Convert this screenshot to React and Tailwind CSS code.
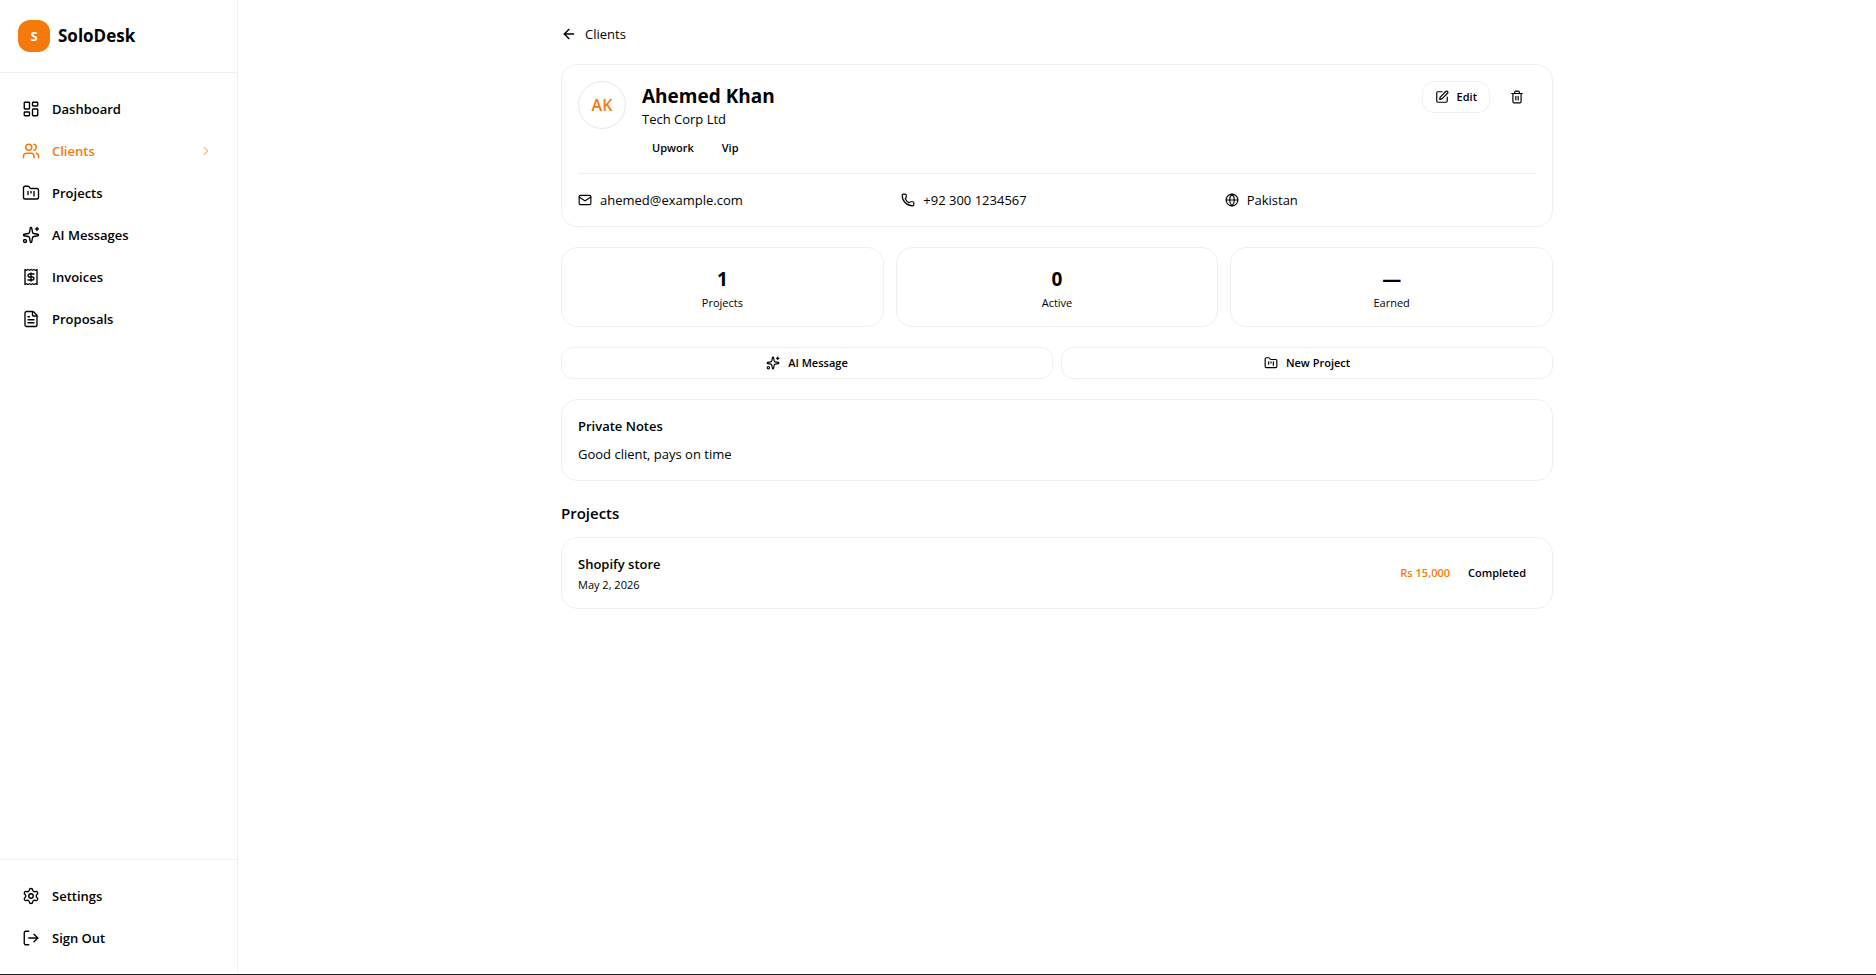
import React from "react";
import {
  ArrowLeft,
  ChevronRight,
  FileText,
  FolderKanban,
  Globe,
  LayoutDashboard,
  LogOut,
  Mail,
  Phone,
  Settings,
  Sparkles,
  SquarePen,
  Trash2,
  Users,
} from "lucide-react";

const ReceiptIcon = ({ size = 18, strokeWidth = 2 }) => (
  <svg
    width={size}
    height={size}
    viewBox="0 0 24 24"
    fill="none"
    stroke="currentColor"
    strokeWidth={strokeWidth}
    strokeLinecap="round"
    strokeLinejoin="round"
    aria-hidden="true"
  >
    <path d="M4 2v20l2-1 2 1 2-1 2 1 2-1 2 1 2-1 2 1V2l-2 1-2-1-2 1-2-1-2 1-2-1-2 1Z" />
    <path d="M16 8h-6a2 2 0 1 0 0 4h4a2 2 0 1 1 0 4H8" />
    <path d="M12 17.5v-11" />
  </svg>
);

const navItems = [
  { label: "Dashboard", icon: LayoutDashboard },
  { label: "Clients", icon: Users, active: true },
  { label: "Projects", icon: FolderKanban },
  { label: "AI Messages", icon: Sparkles },
  { label: "Invoices", icon: ReceiptIcon },
  { label: "Proposals", icon: FileText },
];

const contacts = [
  { value: "ahemed@example.com", icon: Mail },
  { value: "+92 300 1234567", icon: Phone },
  { value: "Pakistan", icon: Globe },
];

const stats = [
  { value: "1", label: "Projects" },
  { value: "0", label: "Active" },
  { value: "—", label: "Earned" },
];

const projects = [
  { id: 1, title: "Shopify store", date: "May 2, 2026", amount: "Rs 15,000", status: "Completed" },
];

const NavLink = ({ label, icon: Icon, active }) => (
  <a
    href="#"
    className={`flex h-10 items-center gap-3 pl-[10px] pr-3 text-[13px] font-semibold leading-5 ${
      active ? "text-[#f67a0b]" : "text-black"
    }`}
  >
    <Icon size={18} strokeWidth={active ? 2 : 1.8} />
    <span className="flex-1">{label}</span>
    {active && <ChevronRight size={14} className="opacity-50" />}
  </a>
);

const Sidebar = () => (
  <aside className="flex w-[238px] shrink-0 flex-col border-r border-[#f0f0f0]">
    <div className="flex items-center gap-2 border-b border-[#f0f0f0] px-[18px] py-5">
      <div className="flex h-8 w-8 items-center justify-center rounded-xl bg-[#f67a0b] text-[13px] font-bold leading-5 text-white">
        S
      </div>
      <span className="text-[17px] font-bold leading-8">SoloDesk</span>
    </div>

    <nav className="flex flex-1 flex-col gap-[2px] px-3 py-4">
      {navItems.map((item) => (
        <NavLink key={item.label} {...item} />
      ))}
    </nav>

    <div className="flex flex-col gap-[2px] border-t border-[#f0f0f0] px-3 py-4">
      <NavLink label="Settings" icon={Settings} />
      <button
        type="button"
        className="flex h-10 items-center gap-3 pl-[10px] pr-3 text-[13px] font-semibold leading-5"
      >
        <LogOut size={18} strokeWidth={1.8} />
        Sign Out
      </button>
    </div>
  </aside>
);

const App = () => {
  return (
    <div className="flex min-h-screen flex-col bg-white font-['Segoe_UI','Open_Sans','Noto_Sans',sans-serif] text-black">
      <div className="flex flex-1">
        <Sidebar />

        <main className="flex-1">
          <div className="mx-auto flex max-w-5xl flex-col gap-5 px-4 py-6">
            <a href="#" className="flex items-center gap-2 self-start text-[13px] leading-5">
              <ArrowLeft size={16} />
              Clients
            </a>

            {/* Client details */}
            <section className="rounded-2xl border border-[#f0f0f0] p-4">
              <div className="flex items-start gap-4">
                <div className="flex h-12 w-12 shrink-0 items-center justify-center rounded-full border border-[#e8e8e8] font-semibold text-[#f67a0b]">
                  AK
                </div>
                <div className="flex-1">
                  <h1 className="text-[19px] font-bold leading-[30px]">Ahemed Khan</h1>
                  <p className="text-[13px] leading-4">Tech Corp Ltd</p>
                  <div className="mt-3 flex gap-2 text-[11px] font-semibold leading-[18px]">
                    <span className="px-[10px]">Upwork</span>
                    <span className="px-[10px]">Vip</span>
                  </div>
                </div>
                <div className="flex gap-2">
                  <button
                    type="button"
                    className="flex h-8 items-center gap-2 rounded-xl border border-[#f0f0f0] px-3 text-[11px] font-semibold leading-[18px]"
                  >
                    <SquarePen size={14} />
                    Edit
                  </button>
                  <button type="button" aria-label="Delete client" className="flex h-8 items-center px-3">
                    <Trash2 size={14} />
                  </button>
                </div>
              </div>

              <div className="mt-4 grid grid-cols-3 gap-3 border-t border-[#f0f0f0] pt-4">
                {contacts.map(({ value, icon: Icon }) => (
                  <div key={value} className="flex items-center gap-2 text-[13px] leading-5">
                    <Icon size={14} />
                    {value}
                  </div>
                ))}
              </div>
            </section>

            {/* Stats */}
            <div className="grid grid-cols-3 gap-3">
              {stats.map((stat) => (
                <div key={stat.label} className="rounded-2xl border border-[#f0f0f0] p-4 text-center">
                  <p className="text-[19px] font-bold leading-[30px]">{stat.value}</p>
                  <p className="mt-[2px] text-[11px] leading-[14px]">{stat.label}</p>
                </div>
              ))}
            </div>

            {/* Quick actions */}
            <div className="grid grid-cols-2 gap-2">
              <button
                type="button"
                className="flex h-8 items-center justify-center gap-2 rounded-xl border border-[#f0f0f0] text-[11px] font-semibold leading-[18px]"
              >
                <Sparkles size={14} />
                AI Message
              </button>
              <button
                type="button"
                className="flex h-8 items-center justify-center gap-2 rounded-xl border border-[#f0f0f0] text-[11px] font-semibold leading-[18px]"
              >
                <FolderKanban size={14} />
                New Project
              </button>
            </div>

            <section className="rounded-2xl border border-[#f0f0f0] p-4 text-[13px] leading-5">
              <h2 className="font-semibold">Private Notes</h2>
              <p className="mt-2">Good client, pays on time</p>
            </section>

            {/* Projects */}
            <section>
              <h2 className="mb-3 text-[15px] font-semibold leading-6">Projects</h2>
              {projects.map((project) => (
                <a
                  key={project.id}
                  href="#"
                  className="flex items-center justify-between rounded-2xl border border-[#f0f0f0] p-4"
                >
                  <div>
                    <h3 className="text-[13px] font-semibold leading-5">{project.title}</h3>
                    <p className="mt-1 text-[11px] leading-[14px]">{project.date}</p>
                  </div>
                  <div className="flex items-center gap-2 text-[11px] font-semibold leading-[18px]">
                    <span className="text-[#f67a0b]">{project.amount}</span>
                    <span className="px-[10px]">{project.status}</span>
                  </div>
                </a>
              ))}
            </section>
          </div>
        </main>
      </div>
      <div className="h-px bg-[#1f1f23]" />
    </div>
  );
};

export default App;
